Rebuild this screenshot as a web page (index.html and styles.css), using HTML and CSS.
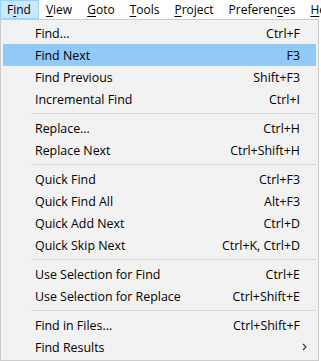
FILE: index.html
```html
<!DOCTYPE html>
<html lang="en">
<head>
  <meta charset="UTF-8" />
  <title>Find menu</title>
  <link rel="stylesheet" href="styles.css">
</head>
<body>
  <div class="menubar">
    <span class="top-item active">F<u>i</u>nd</span>
    <span class="top-item"><u>V</u>iew</span>
    <span class="top-item"><u>G</u>oto</span>
    <span class="top-item"><u>T</u>ools</span>
    <span class="top-item"><u>P</u>roject</span>
    <span class="top-item">Preferen<u>c</u>es</span>
    <span class="top-item"><u>H</u>elp</span>
  </div>

  <div class="menu">
    <div class="item"><span>Find...</span><span class="key">Ctrl+F</span></div>
    <div class="item selected"><span>Find Next</span><span class="key">F3</span></div>
    <div class="item"><span>Find Previous</span><span class="key">Shift+F3</span></div>
    <div class="item"><span>Incremental Find</span><span class="key">Ctrl+I</span></div>
    <div class="sep"></div>
    <div class="item"><span>Replace...</span><span class="key">Ctrl+H</span></div>
    <div class="item"><span>Replace Next</span><span class="key">Ctrl+Shift+H</span></div>
    <div class="sep"></div>
    <div class="item"><span>Quick Find</span><span class="key">Ctrl+F3</span></div>
    <div class="item"><span>Quick Find All</span><span class="key">Alt+F3</span></div>
    <div class="item"><span>Quick Add Next</span><span class="key">Ctrl+D</span></div>
    <div class="item"><span>Quick Skip Next</span><span class="key">Ctrl+K, Ctrl+D</span></div>
    <div class="sep"></div>
    <div class="item"><span>Use Selection for Find</span><span class="key">Ctrl+E</span></div>
    <div class="item"><span>Use Selection for Replace</span><span class="key">Ctrl+Shift+E</span></div>
    <div class="sep"></div>
    <div class="item"><span>Find in Files...</span><span class="key">Ctrl+Shift+F</span></div>
    <div class="item submenu">
      <span>Find Results</span>
      <svg class="arrow" width="5" height="8" viewBox="0 0 5 8">
        <path d="M1 1 L4 4 L1 7" fill="none" stroke="#333" stroke-width="1.1" />
      </svg>
    </div>
  </div>
</body>
</html>
```

FILE: styles.css
```css
body {
  margin: 0;
  background-color: #FFFFFF;
  font-family: 'Open Sans', 'Liberation Sans', sans-serif;
  font-size: 12px;
  color: #000000;
}
u {
  text-decoration: underline;
  text-underline-offset: 2px;
}
.menubar {
  display: flex;
  height: 19px;
  background-color: #FFFFFF;
  white-space: nowrap;
  overflow: hidden;
}
.top-item {
  display: flex;
  align-items: center;
  padding: 0 7px 0 6px;
  border: 1px solid transparent;
  box-sizing: border-box;
  height: 19px;
}
.top-item.active {
  background-color: #CCE8FF;
  border-color: #99D1FF;
}
.menu {
  width: 319px;
  box-sizing: border-box;
  border: 1px solid #CCCCCC;
  background-color: #F2F2F2;
  padding: 2px;
  font-size: 12.4px;
}
.item {
  display: flex;
  justify-content: space-between;
  align-items: center;
  height: 22px;
  padding: 0 16px 0 32px;
  white-space: nowrap;
}
.item.selected {
  background-color: #91C9F7;
}
.item.submenu {
  padding-right: 9px;
}
.sep {
  height: 1px;
  background-color: #D7D7D7;
  margin: 3px 0 3px 28px;
}
```
